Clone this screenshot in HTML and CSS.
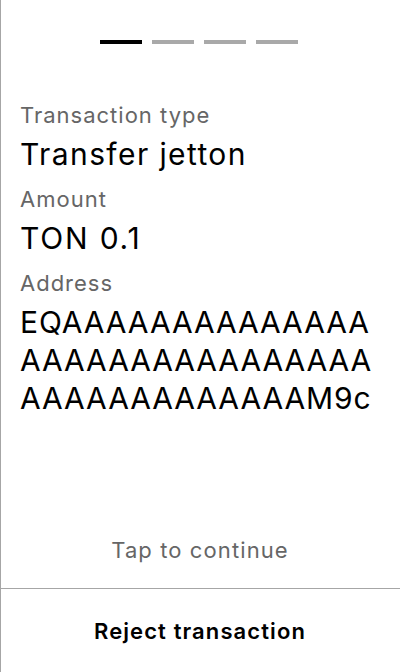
FILE: index.html
```html
<!DOCTYPE html>
<html lang="en">
<head>
<meta charset="utf-8">
<title>Transaction</title>
<link rel="stylesheet" href="styles.css">
</head>
<body>
<div class="screen">
  <div class="progress">
    <span class="dash dash-active"></span>
    <span class="dash"></span>
    <span class="dash"></span>
    <span class="dash"></span>
  </div>
  <div class="details">
    <div class="field">
      <div class="label">Transaction type</div>
      <div class="value">Transfer jetton</div>
    </div>
    <div class="field">
      <div class="label">Amount</div>
      <div class="value value-amount">TON 0.1</div>
    </div>
    <div class="field">
      <div class="label">Address</div>
      <div class="value value-address">EQAAAAAAAAAAAAAAAAAAAAAAAAAAAAAAAAAAAAAAAAAAAM9c</div>
    </div>
  </div>
  <div class="hint">Tap to continue</div>
  <button class="reject">Reject transaction</button>
</div>
</body>
</html>
```
FILE: styles.css
```css
* { box-sizing: border-box; }
html, body {
  margin: 0;
  padding: 0;
  background: #fff;
}
body {
  font-family: Inter, "Noto Sans", sans-serif;
  color: #000;
}
.screen {
  width: 400px;
  height: 672px;
  display: flex;
  flex-direction: column;
  box-shadow: inset 1px 0 0 #a6a6a6;
}
.progress {
  display: flex;
  justify-content: center;
  gap: 10px;
  padding-top: 40px;
  padding-right: 2px;
}
.dash {
  width: 42px;
  height: 4px;
  background: #a9a9a9;
}
.dash-active { background: #000; }
.details {
  flex: 1;
  padding: 56px 20px 0 20px;
  display: flex;
  flex-direction: column;
  gap: 11px;
}
.label {
  font-size: 22px;
  line-height: 30px;
  color: #666;
  margin-bottom: 5px;
  letter-spacing: 1px;
}
.value {
  font-size: 30px;
  line-height: 38px;
  color: #000;
  letter-spacing: 1.4px;
}
.value-amount { letter-spacing: 1.8px; }
.value-address {
  word-break: break-all;
  letter-spacing: 0.9px;
}
.hint {
  text-align: center;
  font-size: 22px;
  line-height: 30px;
  color: #666;
  padding-bottom: 23px;
  letter-spacing: 1.1px;
}
.reject {
  height: 84px;
  width: 100%;
  border: none;
  border-top: 1px solid #a6a6a6;
  background: transparent;
  font-family: inherit;
  font-size: 22px;
  font-weight: 600;
  color: #000;
  padding: 0;
  letter-spacing: 1.1px;
}
```
